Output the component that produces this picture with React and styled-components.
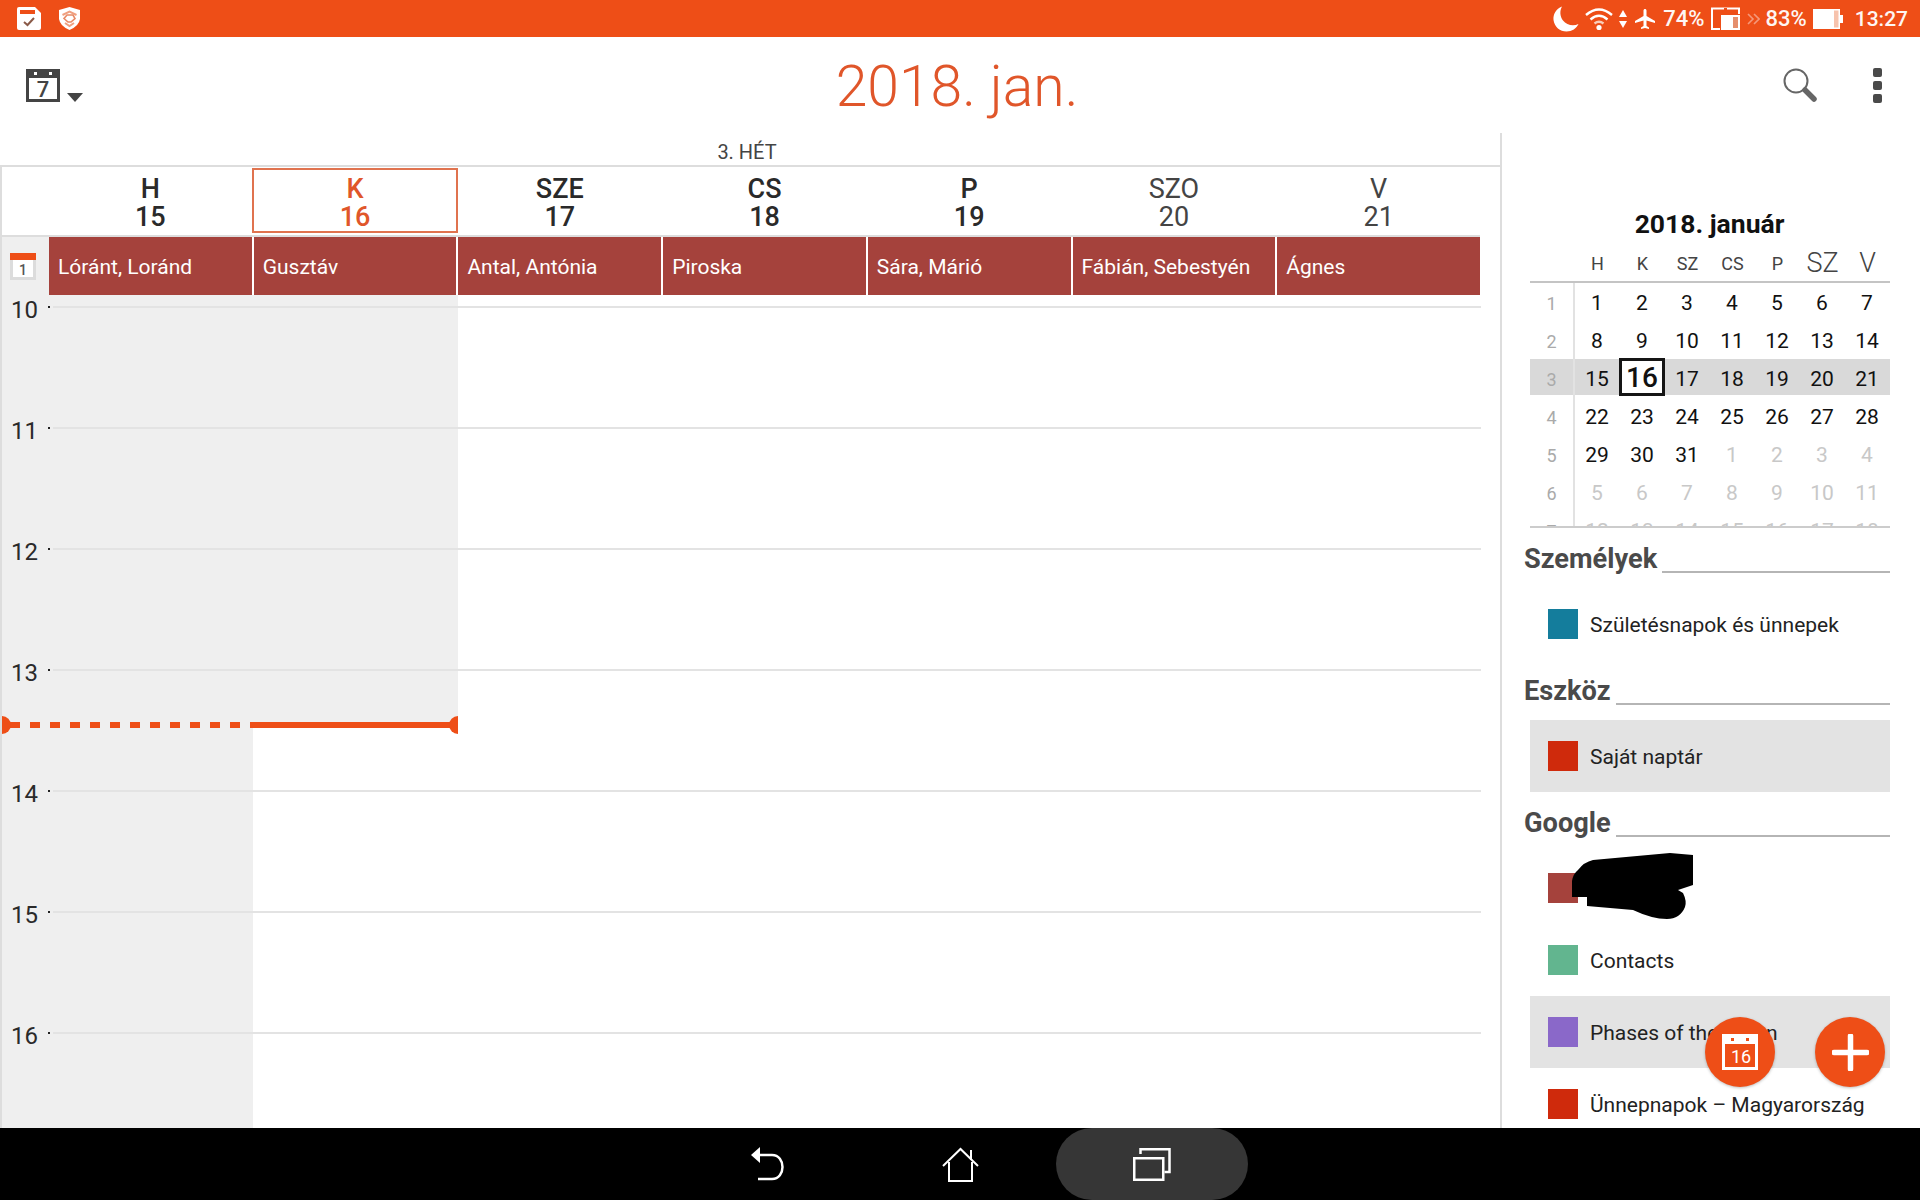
import styled, { createGlobalStyle } from "styled-components";

const ORANGE = "#ee4e17";

const days = [
  { name: "H", num: 15, saint: "Lóránt, Loránd" },
  { name: "K", num: 16, saint: "Gusztáv", today: true },
  { name: "SZE", num: 17, saint: "Antal, Antónia" },
  { name: "CS", num: 18, saint: "Piroska" },
  { name: "P", num: 19, saint: "Sára, Márió" },
  { name: "SZO", num: 20, saint: "Fábián, Sebestyén", weekend: true },
  { name: "V", num: 21, saint: "Ágnes", weekend: true },
];

const hours = [10, 11, 12, 13, 14, 15, 16];

const weeks = [
  { n: 1, days: [[1], [2], [3], [4], [5], [6], [7]] },
  { n: 2, days: [[8], [9], [10], [11], [12], [13], [14]] },
  { n: 3, days: [[15], [16], [17], [18], [19], [20], [21]], current: true },
  { n: 4, days: [[22], [23], [24], [25], [26], [27], [28]] },
  { n: 5, days: [[29], [30], [31], [1, 1], [2, 1], [3, 1], [4, 1]] },
  { n: 6, days: [[5, 1], [6, 1], [7, 1], [8, 1], [9, 1], [10, 1], [11, 1]] },
  { n: 7, days: [[12, 1], [13, 1], [14, 1], [15, 1], [16, 1], [17, 1], [18, 1]] },
];

const GlobalStyle = createGlobalStyle`
  html, body {
    margin: 0;
    padding: 0;
    background: #fff;
    overflow: hidden;
  }
  * {
    box-sizing: border-box;
  }
`;

function TaskIcon() {
  return (
    <svg width="24" height="23" viewBox="0 0 24 23">
      <path d="M2 0H18L24 6V21Q24 23 22 23H2Q0 23 0 21V2Q0 0 2 0Z" fill="#fff" />
      <rect x="3" y="3" width="15" height="4" fill={ORANGE} />
      <path d="M7 15L10.5 18L17 11" fill="none" stroke="#8a5a48" strokeWidth="2" />
    </svg>
  );
}

function ShieldIcon() {
  return (
    <svg width="21" height="23" viewBox="0 0 21 23">
      <path d="M10.5 0L21 3V12Q20 19 10.5 23Q1 19 0 12V3Z" fill="#fff" />
      <path d="M3.5 8L10.5 4.5L17.5 8" fill="none" stroke="#f0a080" strokeWidth="2" />
      <path d="M8 8H14L16 11.5L12 15H9L5 11.5Z" fill="none" stroke="#e88a66" strokeWidth="1.6" />
      <path d="M6 16L10.5 19L15 16" fill="none" stroke="#f0a080" strokeWidth="2" />
    </svg>
  );
}

function MoonIcon() {
  return (
    <svg width="26" height="26" viewBox="0 0 26 26">
      <path d="M9 0.5C3 3 0 8 0.5 14C1.5 21 7 25.5 13.500 25.500C19 25.500 23.500 22.500 25.500 18C20 20.500 13.500 19 10 14.500C7 10.500 6.500 5 9 0.500Z" fill="#fff" />
    </svg>
  );
}

function WifiIcon() {
  return (
    <svg width="28" height="24" viewBox="0 0 28 24">
      <g fill="none" stroke="#fff" strokeWidth="2.4">
        <path d="M1 8Q14 -3 27 8" />
        <path d="M5.500 12.500Q14 5 22.500 12.500" />
        <path d="M9.500 16.500Q14 13 18.500 16.500" stroke="#f9cdb9" />
      </g>
      <circle cx="14" cy="20.500" r="2.600" fill="#fff" />
    </svg>
  );
}

function ArrowsIcon() {
  return (
    <svg width="8" height="18" viewBox="0 0 8 18">
      <path d="M4 0L8 7H0Z" fill="#fff" />
      <path d="M4 18L8 11H0Z" fill="#fff" />
    </svg>
  );
}

function PlaneIcon() {
  return (
    <svg width="24" height="24" viewBox="0 0 24 24">
      <path
        d="M22 16v-2l-8.500-5V3.500c0-.83-.67-1.500-1.500-1.500s-1.500.67-1.500 1.500V9L2 14v2l8.500-2.500V19L8 20.500V22l4-1 4 1v-1.500L13.500 19v-5.500z"
        fill="#fff"
      />
    </svg>
  );
}

function DeviceIcon() {
  return (
    <svg width="30" height="24" viewBox="0 0 30 24">
      <path d="M9 22H1V1.500H28V7" fill="none" stroke="#fff" strokeWidth="2" />
      <rect x="10" y="8" width="19" height="15" fill="#fff" />
      <rect x="22" y="10" width="5" height="11" fill="#e58f6d" />
      <rect x="13" y="1" width="3" height="2" fill={ORANGE} />
    </svg>
  );
}

function ChevronsIcon() {
  return (
    <svg width="13" height="12" viewBox="0 0 13 12">
      <path d="M1 1L6 6L1 11M7 1L12 6L7 11" fill="none" stroke="#f5987a" strokeWidth="1.600" />
    </svg>
  );
}

function BatteryIcon() {
  return (
    <svg width="30" height="20" viewBox="0 0 30 20">
      <rect x="0" y="0" width="27" height="20" fill="#fff" />
      <rect x="21" y="1.500" width="4.500" height="17" fill="#f7c3ad" />
      <rect x="27" y="6" width="3" height="8" fill="#fff" />
    </svg>
  );
}

function WeekViewIcon() {
  return (
    <svg width="34" height="33" viewBox="0 0 34 33">
      <path d="M0 0H34V33H0Z" fill="#444" />
      <rect x="3" y="9" width="28" height="21" fill="#fff" />
      <rect x="8" y="3" width="3" height="3" fill="#fff" />
      <rect x="23" y="3" width="3" height="3" fill="#fff" />
      <text x="17" y="27.500" textAnchor="middle" fontFamily="Roboto" fontSize="22" fontWeight="500" fill="#444">
        7
      </text>
    </svg>
  );
}

function SearchIcon() {
  return (
    <svg width="34" height="34" viewBox="0 0 34 34">
      <circle cx="13" cy="13" r="11.500" fill="none" stroke="#666" strokeWidth="2" />
      <path d="M22 22L31 31" stroke="#666" strokeWidth="5.500" strokeLinecap="round" />
    </svg>
  );
}

function DayCalendarIcon() {
  return (
    <svg width="26" height="27" viewBox="0 0 26 27">
      <rect x="0" y="0" width="26" height="27" fill="#dcdcdc" />
      <rect x="3" y="6" width="20" height="18" fill="#fff" />
      <rect x="0" y="0" width="26" height="7" fill={ORANGE} />
      <text x="13" y="22" textAnchor="middle" fontFamily="Roboto" fontSize="14" fontWeight="500" fill="#555">
        1
      </text>
    </svg>
  );
}

function TodayFabIcon() {
  return (
    <svg width="36" height="36" viewBox="0 0 36 36">
      <path d="M0 0H36V36H0Z" fill="#fff" />
      <rect x="3" y="10" width="30" height="23" fill={ORANGE} />
      <rect x="9" y="4" width="3" height="3" fill={ORANGE} />
      <rect x="24" y="4" width="3" height="3" fill={ORANGE} />
      <text x="19" y="29" textAnchor="middle" fontFamily="Roboto" fontSize="18" fill="#fff">
        16
      </text>
    </svg>
  );
}

function PlusIcon() {
  return (
    <svg width="37" height="37" viewBox="0 0 37 37">
      <path d="M18.500 2V35M2 18.500H35" stroke="#fff" strokeWidth="5.500" strokeLinecap="round" />
    </svg>
  );
}

function BackIcon() {
  return (
    <svg width="34" height="36" viewBox="0 0 34 36">
      <path d="M7 9H21C35 9 35 33 21 33H7" fill="none" stroke="#fff" strokeWidth="2.500" />
      <path d="M0 9L9 1V17Z" fill="#fff" />
    </svg>
  );
}

function HomeIcon() {
  return (
    <svg width="37" height="35" viewBox="0 0 37 35">
      <path d="M1 19L18.500 2L36 19" fill="none" stroke="#fff" strokeWidth="2" />
      <path d="M7 15V34H30V15" fill="none" stroke="#fff" strokeWidth="2" />
      <path d="M29 3V13" fill="none" stroke="#fff" strokeWidth="2" />
    </svg>
  );
}

function RecentIcon() {
  return (
    <svg width="38" height="33" viewBox="0 0 38 33">
      <rect x="1.250" y="10.250" width="29" height="21.500" fill="none" stroke="#fff" strokeWidth="2.500" />
      <path d="M7.500 6V1.250H36.500V24H31.500" fill="none" stroke="#fff" strokeWidth="2.500" />
    </svg>
  );
}

export default function App() {
  return (
    <Page>
      <GlobalStyle />
      <StatusBar>
        <StatusGroup>
          <TaskIcon />
          <ShieldIcon />
        </StatusGroup>
        <StatusRight>
          <MoonIcon />
          <WifiIcon />
          <ArrowsIcon />
          <PlaneIcon />
          <StatusText>74%</StatusText>
          <DeviceIcon />
          <ChevronsIcon />
          <StatusText>83%</StatusText>
          <BatteryIcon />
          <Clock>13:27</Clock>
        </StatusRight>
      </StatusBar>

      <Toolbar>
        <ViewSwitch>
          <WeekViewIcon />
          <Caret />
        </ViewSwitch>
        <Title>2018. jan.</Title>
        <ToolbarActions>
          <SearchIcon />
          <Kebab>
            <span />
            <span />
            <span />
          </Kebab>
        </ToolbarActions>
      </Toolbar>

      <Main>
        <WeekPane>
          <WeekLabel>3. HÉT</WeekLabel>
          <DayHeader>
            {days.map((d) => (
              <DayHead key={d.num} $today={d.today} $weekend={d.weekend}>
                <span>{d.name}</span>
                <span>{d.num}</span>
              </DayHead>
            ))}
          </DayHeader>
          <AllDayRow>
            <AllDayGutter>
              <DayCalendarIcon />
            </AllDayGutter>
            <AllDayCells>
              {days.map((d) => (
                <AllDayCell key={d.num}>{d.saint}</AllDayCell>
              ))}
            </AllDayCells>
          </AllDayRow>
          <HourGrid>
            {hours.map((h) => (
              <HourRow key={h}>
                <HourLabel>{h}</HourLabel>
                <HourDot />
                <HourLine />
              </HourRow>
            ))}
            <NowLine>
              <NowDashed />
              <NowSolid />
            </NowLine>
          </HourGrid>
        </WeekPane>

        <Sidebar>
          <MiniTitle>2018. január</MiniTitle>
          <MiniWeekdays>
            <span />
            <MiniWeekday>H</MiniWeekday>
            <MiniWeekday>K</MiniWeekday>
            <MiniWeekday>SZ</MiniWeekday>
            <MiniWeekday>CS</MiniWeekday>
            <MiniWeekday>P</MiniWeekday>
            <MiniWeekday $big>SZ</MiniWeekday>
            <MiniWeekday $big>V</MiniWeekday>
          </MiniWeekdays>
          <MiniWeeks>
            {weeks.map((w) => (
              <MiniWeek key={w.n} $current={w.current}>
                <WeekNumber>{w.n}</WeekNumber>
                {w.days.map(([day, other]) =>
                  w.current && day === 16 ? (
                    <TodayBox key={day}>{day}</TodayBox>
                  ) : (
                    <MiniDay key={day} $other={other}>
                      {day}
                    </MiniDay>
                  )
                )}
              </MiniWeek>
            ))}
          </MiniWeeks>

          <SectionTitle>
            <span>Személyek</span>
            <i />
          </SectionTitle>
          <CalendarItem>
            <Swatch $color="#147d9c" />
            <ItemLabel>Születésnapok és ünnepek</ItemLabel>
          </CalendarItem>

          <SectionTitle>
            <span>Eszköz</span>
            <i />
          </SectionTitle>
          <CalendarItem $active>
            <Swatch $color="#cf2a0c" />
            <ItemLabel>Saját naptár</ItemLabel>
          </CalendarItem>

          <SectionTitle>
            <span>Google</span>
            <i />
          </SectionTitle>
          <CalendarItem>
            <Swatch $color="#a5423c" />
            <Redaction viewBox="0 0 121 66" width="121" height="66">
              <path d="M0 44L0 28Q1 21 6 17Q12 9 21 7L98 0L121 2L121 32L106 37L111 40Q115 48 113 54Q108 66 95 66Q80 66 61 57L15 53L15 44Z" />
            </Redaction>
          </CalendarItem>
          <CalendarItem>
            <Swatch $color="#62b58f" />
            <ItemLabel>Contacts</ItemLabel>
          </CalendarItem>
          <CalendarItem $active>
            <Swatch $color="#8a68c9" />
            <ItemLabel>Phases of the moon</ItemLabel>
          </CalendarItem>
          <CalendarItem>
            <Swatch $color="#cf2a0c" />
            <ItemLabel>Ünnepnapok – Magyarország</ItemLabel>
          </CalendarItem>

          <TodayFab>
            <TodayFabIcon />
          </TodayFab>
          <AddFab>
            <PlusIcon />
          </AddFab>
        </Sidebar>
      </Main>

      <NavBar>
        <NavSlot>
          <BackIcon />
        </NavSlot>
        <NavSlot>
          <HomeIcon />
        </NavSlot>
        <NavSlot $active>
          <RecentIcon />
        </NavSlot>
      </NavBar>
    </Page>
  );
}

const Page = styled.div`
  width: 1920px;
  height: 1200px;
  display: flex;
  flex-direction: column;
  background: #fff;
  font-family: Roboto, "Liberation Sans", sans-serif;
  overflow: hidden;
`;

const StatusBar = styled.div`
  height: 37px;
  flex: none;
  background: ${ORANGE};
  display: flex;
  align-items: center;
  justify-content: space-between;
  padding: 0 12px 0 17px;
  color: #fff;
`;

const StatusGroup = styled.div`
  display: flex;
  align-items: center;
  gap: 18px;
`;

const StatusRight = styled.div`
  display: flex;
  align-items: center;
  gap: 6px;
`;

const StatusText = styled.span`
  font-size: 22px;
  font-weight: 500;
  opacity: 0.95;
`;

const Clock = styled(StatusText)`
  margin-left: 6px;
  font-size: 21px;
`;

const Toolbar = styled.div`
  height: 96px;
  flex: none;
  display: grid;
  grid-template-columns: 1fr auto 1fr;
  align-items: center;
  padding: 0 38px 0 26px;
`;

const ViewSwitch = styled.div`
  display: flex;
  align-items: flex-end;
  gap: 7px;
`;

const Caret = styled.div`
  width: 0;
  height: 0;
  border-left: 8px solid transparent;
  border-right: 8px solid transparent;
  border-top: 9px solid #444;
`;

const Title = styled.div`
  font-size: 57px;
  font-weight: 300;
  color: #e0562a;
  margin-left: 6px;
  padding-top: 3px;
`;

const ToolbarActions = styled.div`
  display: flex;
  justify-content: flex-end;
  align-items: center;
  gap: 56px;
`;

const Kebab = styled.div`
  display: flex;
  flex-direction: column;
  gap: 4px;

  span {
    display: block;
    width: 9px;
    height: 9px;
    border-radius: 2px;
    background: #4a4a4a;
  }
`;

const Main = styled.div`
  flex: 1;
  min-height: 0;
  display: flex;
`;

const WeekPane = styled.div`
  width: 1500px;
  flex: none;
  display: flex;
  flex-direction: column;
  overflow: hidden;
`;

const WeekLabel = styled.div`
  height: 34px;
  flex: none;
  display: flex;
  align-items: center;
  justify-content: center;
  padding-right: 6px;
  padding-top: 5px;
  font-size: 20px;
  color: #444;
  border-bottom: 2px solid #ddd;
`;

const DayHeader = styled.div`
  height: 70px;
  flex: none;
  width: 1480px;
  padding: 1px 0 2px 47px;
  display: grid;
  grid-template-columns: repeat(7, 1fr);
  gap: 2px;
  border-left: 2px solid #ddd;
  border-bottom: 2px solid #ddd;
`;

const DayHead = styled.div`
  display: flex;
  flex-direction: column;
  align-items: center;
  justify-content: center;
  font-size: 27px;
  line-height: 28px;
  padding-top: 4px;
  font-weight: ${(p) => (p.$weekend ? 400 : 500)};
  color: ${(p) => (p.$today ? "#e0562a" : p.$weekend ? "#444" : "#2a2a2a")};
  ${(p) =>
    p.$today &&
    `
    border: 2px solid #e0734f;
    margin: 0 -2px;
  `}
`;

const AllDayRow = styled.div`
  height: 58px;
  flex: none;
  width: 1480px;
  display: flex;
  border-left: 2px solid #ddd;
`;

const AllDayGutter = styled.div`
  width: 47px;
  flex: none;
  background: #efefef;
  display: flex;
  align-items: center;
  padding-left: 8px;
`;

const AllDayCells = styled.div`
  flex: 1;
  display: grid;
  grid-template-columns: repeat(7, 1fr);
  gap: 2px;
`;

const AllDayCell = styled.div`
  background: #a5423c;
  color: #fff;
  font-size: 21px;
  display: flex;
  align-items: center;
  padding: 1px 0 0 9px;
  white-space: nowrap;
`;

const HourGrid = styled.div`
  flex: 1;
  min-height: 0;
  position: relative;
  padding-top: 11px;
  border-left: 2px solid #ddd;
  background:
    linear-gradient(#efefef, #efefef) 0 0 / 456px 430px no-repeat,
    linear-gradient(#efefef, #efefef) 0 0 / 251px 100% no-repeat;
`;

const HourRow = styled.div`
  height: 121px;
  display: flex;
  align-items: flex-start;
  padding-left: 9px;
`;

const HourLabel = styled.div`
  width: 37px;
  font-size: 24px;
  line-height: 28px;
  margin-top: -10px;
  color: #2a2a2a;
`;

const HourDot = styled.div`
  width: 2px;
  height: 2px;
  background: #222;
  margin-right: 3px;
`;

const HourLine = styled.div`
  width: 1428px;
  height: 2px;
  background: #e3e3e3;
`;

const NowLine = styled.div`
  position: absolute;
  left: 0;
  top: 427px;
  width: 456px;
  height: 6px;
  display: flex;

  &::before,
  &::after {
    content: "";
    position: absolute;
    top: -6px;
    width: 9px;
    height: 18px;
    background: ${ORANGE};
  }
  &::before {
    left: 0;
    border-radius: 0 9px 9px 0;
  }
  &::after {
    right: 0;
    border-radius: 9px 0 0 9px;
  }
`;

const NowDashed = styled.div`
  width: 248px;
  background: repeating-linear-gradient(to right, transparent 0 8px, ${ORANGE} 8px 18px, transparent 18px 20px);
`;

const NowSolid = styled.div`
  flex: 1;
  background: ${ORANGE};
`;

const Sidebar = styled.div`
  flex: 1;
  min-width: 0;
  position: relative;
  overflow: hidden;
  border-left: 2px solid #ddd;
  padding: 70px 30px 0 28px;
`;

const MiniTitle = styled.div`
  height: 40px;
  display: flex;
  align-items: center;
  justify-content: center;
  padding-right: 1px;
  font-size: 26.5px;
  font-weight: 700;
  color: #111;
`;

const MiniWeekdays = styled.div`
  height: 40px;
  display: grid;
  grid-template-columns: repeat(8, 45px);
  align-items: center;
  justify-items: center;
  padding-top: 2px;
  border-bottom: 2px solid #c4c4c4;
`;

const MiniWeekday = styled.div`
  font-size: ${(p) => (p.$big ? "27px" : "18px")};
  font-weight: ${(p) => (p.$big ? 300 : 400)};
  color: #444;
`;

const MiniWeeks = styled.div`
  height: 245px;
  overflow: hidden;
  border-bottom: 2px solid #ccc;
`;

const MiniWeek = styled.div`
  height: 38px;
  display: grid;
  grid-template-columns: repeat(8, 45px);
  align-items: center;
  justify-items: center;
  ${(p) => p.$current && "background: linear-gradient(#d9d9d9, #d9d9d9) 0 0 / 100% 36px no-repeat;"}
`;

const WeekNumber = styled.div`
  width: 100%;
  height: 100%;
  display: flex;
  align-items: center;
  justify-content: center;
  font-size: 18px;
  color: #aaa;
  border-right: 2px solid #e2e2e2;
  padding-top: 2px;
`;

const MiniDay = styled.div`
  font-size: 21px;
  padding: 2px 1px 0 0;
  color: ${(p) => (p.$other ? "#c8c8c8" : "#111")};
`;

const TodayBox = styled.div`
  width: 46px;
  height: 38px;
  margin: -2px 0 0 -1px;
  border: 3px solid #151515;
  background: #fff;
  display: flex;
  align-items: center;
  justify-content: center;
  font-size: 28px;
  font-weight: 500;
  color: #111;
`;

const SectionTitle = styled.div`
  height: 60px;
  margin-left: -6px;
  display: flex;
  align-items: center;
  gap: 5px;

  span {
    font-size: 27.2px;
    font-weight: 700;
    color: #4a4a4a;
    line-height: 32px;
    padding-top: 2px;
  }
  i {
    flex: 1;
    height: 2px;
    background: #b5b5b5;
    margin-top: 28px;
  }
`;

const CalendarItem = styled.div`
  height: 72px;
  flex: none;
  position: relative;
  display: flex;
  align-items: center;
  gap: 12px;
  padding-left: 18px;
  font-size: 21px;
  color: #222;
  white-space: nowrap;
  background: ${(p) => (p.$active ? "#e3e3e3" : "transparent")};
`;

const ItemLabel = styled.span`
  padding-top: 2px;
`;

const Swatch = styled.div`
  width: 30px;
  height: 30px;
  flex: none;
  background: ${(p) => p.$color};
`;

const Redaction = styled.svg`
  position: absolute;
  left: 42px;
  top: 1px;
  fill: #000;
`;

const Fab = styled.div`
  position: absolute;
  bottom: 41px;
  width: 70px;
  height: 70px;
  border-radius: 50%;
  background: ${ORANGE};
  box-shadow: 0 1px 3px rgba(0, 0, 0, 0.25);
  display: flex;
  align-items: center;
  justify-content: center;
`;

const TodayFab = styled(Fab)`
  right: 145px;
`;

const AddFab = styled(Fab)`
  right: 35px;
`;

const NavBar = styled.div`
  height: 72px;
  flex: none;
  background: #000;
  display: flex;
  justify-content: center;
`;

const NavSlot = styled.div`
  width: 192px;
  display: flex;
  align-items: center;
  justify-content: center;
  ${(p) => p.$active && "background: #363636; border-radius: 36px;"}
`;
